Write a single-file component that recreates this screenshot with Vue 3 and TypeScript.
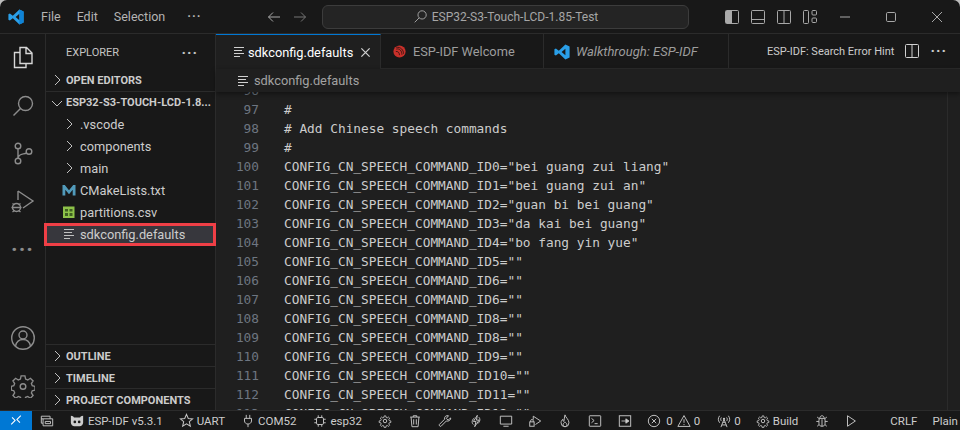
<script setup lang="ts">
interface Row { label: string; kind: 'folder' | 'cmake' | 'csv' | 'text' }
const rows: Row[] = [
  { label: '.vscode', kind: 'folder' },
  { label: 'components', kind: 'folder' },
  { label: 'main', kind: 'folder' },
  { label: 'CMakeLists.txt', kind: 'cmake' },
  { label: 'partitions.csv', kind: 'csv' },
  { label: 'sdkconfig.defaults', kind: 'text' },
]
const p = 'CONFIG_CN_SPEECH_COMMAND_ID'
const lines: [number, string][] = [
  [96, ''], [97, '#'], [98, '# Add Chinese speech commands'], [99, '#'],
  [100, p + '0="bei guang zui liang"'], [101, p + '1="bei guang zui an"'],
  [102, p + '2="guan bi bei guang"'], [103, p + '3="da kai bei guang"'],
  [104, p + '4="bo fang yin yue"'], [105, p + '5=""'], [106, p + '6=""'],
  [107, p + '6=""'], [108, p + '8=""'], [109, p + '8=""'], [110, p + '9=""'],
  [111, p + '10=""'], [112, p + '11=""'], [113, p + '12=""'],
]
</script>

<template>
  <div class="win">
    <header class="title">
      <svg class="logo" viewBox="0 0 16 16" width="16" height="16">
        <path d="M11.4 0.6 15.6 2.4v11.2l-4.2 1.8L4.8 9.2 1.9 11.5.4 10.7V5.3l1.5-.8 2.9 2.3zM11.4 4.8 7.6 8l3.8 3.2z" fill="#2a9fe8"/>
        <path d="M11.4.6 15.6 2.4v11.2l-4.2 1.8z" fill="#0f83d6"/>
      </svg>
      <nav class="menu"><span>File</span><span>Edit</span><span>Selection</span><span class="menu-more">···</span></nav>
      <div class="arrows">
        <svg viewBox="0 0 16 16" width="16" height="16"><path d="M14 8H2.500M7 3.500 2.500 8 7 12.500" class="ln"/></svg>
        <svg class="dim" viewBox="0 0 16 16" width="16" height="16"><path d="M2 8h11.500M9 3.500 13.500 8 9 12.500" class="ln"/></svg>
      </div>
      <div class="search">
        <svg viewBox="0 0 16 16" width="15" height="15"><circle cx="9.700" cy="6.300" r="4.400" class="ln"/><path d="M6.500 9.500 1.800 14.200" class="ln"/></svg>
        <span>ESP32-S3-Touch-LCD-1.85-Test</span>
      </div>
      <div class="layouts">
        <svg viewBox="0 0 16 16" width="16" height="16"><rect x="1.500" y="1.500" width="13" height="13" rx="1" class="ln"/><rect x="2" y="2" width="6" height="12" fill="#aaa"/></svg>
        <svg viewBox="0 0 16 16" width="16" height="16"><rect x="1.500" y="1.500" width="13" height="13" rx="1" class="ln"/><path d="M2 10.500h12" class="ln"/></svg>
        <svg viewBox="0 0 16 16" width="16" height="16"><rect x="1.500" y="1.500" width="13" height="13" rx="1" class="ln"/><path d="M8 2v12" class="ln"/></svg>
        <svg viewBox="0 0 16 16" width="16" height="16"><rect x="1.500" y="1.500" width="5" height="13" rx="1" class="ln"/><rect x="10" y="1.500" width="4.500" height="4.500" rx="1" class="ln"/><rect x="10" y="9" width="4.500" height="4.500" rx="1" class="ln"/></svg>
      </div>
      <div class="winbtns">
        <svg viewBox="0 0 12 12" width="12" height="12"><path d="M1 6h10" class="ln"/></svg>
        <svg viewBox="0 0 12 12" width="12" height="12"><rect x="1.500" y="1.500" width="9" height="9" rx="1.200" class="ln"/></svg>
        <svg viewBox="0 0 12 12" width="12" height="12"><path d="M1 1l10 10M11 1 1 11" class="ln"/></svg>
      </div>
    </header>

    <div class="main">
      <aside class="activity">
        <svg class="act on" viewBox="0 0 24 24" width="24" height="24"><path d="M9 1.500h6.500L21 7V17.500H9z M15 1.500V7.500h6 M9 6.500H3.500V21.500H15V17.500" class="ln"/></svg>
        <svg class="act" viewBox="0 0 24 24" width="24" height="24"><circle cx="14.500" cy="9.500" r="7" class="ln"/><path d="M9.500 14.500 2.500 21.500" class="ln"/></svg>
        <svg class="act" viewBox="0 0 24 24" width="24" height="24"><circle cx="7" cy="4" r="2.800" class="ln"/><circle cx="7" cy="19" r="2.800" class="ln"/><circle cx="18" cy="9.500" r="2.800" class="ln"/><path d="M7 6.800v9.400M15.500 11c-3 1.500-8 0-8.500 5.200" class="ln"/></svg>
        <svg class="act" viewBox="0 0 24 24" width="24" height="24"><path d="M7 1 22 11 12 18M7 1v9" class="ln"/><circle cx="5.500" cy="17.500" r="4" class="ln"/><path d="M1.500 13.500l2 1.500M9.500 13.500l-2 1.500M.5 17.500h10M1.500 22l2-1.500M9.500 22l-2-1.500" class="ln"/></svg>
        <span class="act dots">···</span>
        <div class="spacer"></div>
        <svg class="act" viewBox="0 0 24 24" width="24" height="24"><circle cx="12" cy="12" r="11.300" class="ln"/><circle cx="12" cy="9" r="4" class="ln"/><path d="M4.500 20c1-4.500 3.500-6.500 7.500-6.500s6.500 2 7.500 6.500" class="ln"/></svg>
        <svg class="act" viewBox="0 0 24 24" width="24" height="24"><path d="M10 1.500h4l.7 3.300 2.200.9 2.800-1.800 2.800 2.800-1.800 2.800.9 2.200 2.900.7v3.800l-2.900.7-.9 2.200 1.800 2.800-2.800 2.800-2.800-1.800-2.200.9-.7 1.700h-4l-.7-1.700-2.200-.9-2.800 1.800-2.800-2.800 1.800-2.800-.9-2.200-2.600-.7v-3.800l2.600-.7.9-2.200-1.800-2.800 2.800-2.800 2.800 1.800 2.200-.9z" class="ln" transform="translate(0.500 0.500) scale(.96)"/><circle cx="12" cy="12.500" r="2.800" class="ln"/></svg>
      </aside>

      <aside class="side">
        <div class="side-head"><span>EXPLORER</span><span class="side-more">···</span></div>
        <div class="sec"><svg class="chev" viewBox="0 0 16 16" width="16" height="16"><path d="M6 3l5 5-5 5" class="ln"/></svg><b>OPEN EDITORS</b></div>
        <div class="sec root"><svg class="chev" viewBox="0 0 16 16" width="16" height="16"><path d="M3 6l5 5 5-5" class="ln"/></svg><b>ESP32-S3-TOUCH-LCD-1.8...</b></div>
        <div v-for="r in rows" :key="r.label" class="row" :class="{ sel: r.kind === 'text' }">
          <svg v-if="r.kind === 'folder'" class="ric" viewBox="0 0 16 16" width="16" height="16"><path d="M6 3l5 5-5 5" class="ln"/></svg>
          <svg v-else-if="r.kind === 'cmake'" class="ric" viewBox="0 0 16 16" width="16" height="16"><path d="M1.500 13.500V3h2.300L8 8.300 12.200 3h2.300v10.500h-2.800V7.800L8 12.300 4.300 7.800v5.700z" fill="#519aba"/></svg>
          <svg v-else-if="r.kind === 'csv'" class="ric" viewBox="0 0 16 16" width="16" height="16"><rect x="2" y="2.500" width="11.500" height="11.500" fill="#8dc149"/><path d="M4 5h3v2.500H4zM8.500 5h3v2.500h-3zM4 9h3v3H4zM8.500 9h3v3h-3z" fill="#3f5f22"/></svg>
          <svg v-else class="ric" viewBox="0 0 16 16" width="16" height="16"><path d="M3 3.500h10M3 6.500h8M3 9.500h10M3 12.500h6" class="ln bright"/></svg>
          <span>{{ r.label }}</span>
        </div>
        <div class="spacer"></div>
        <div v-for="s in ['OUTLINE', 'TIMELINE', 'PROJECT COMPONENTS']" :key="s" class="sec foot">
          <svg class="chev" viewBox="0 0 16 16" width="16" height="16"><path d="M6 3l5 5-5 5" class="ln"/></svg><b>{{ s }}</b>
        </div>
      </aside>

      <section class="editor">
        <div class="tabs">
          <div class="tab active">
            <svg viewBox="0 0 16 16" width="16" height="16"><path d="M3 3.500h10M3 6.500h8M3 9.500h10M3 12.500h6" class="ln bright"/></svg>
            <span>sdkconfig.defaults</span>
            <svg class="x" viewBox="0 0 16 16" width="11" height="11"><path d="M2 2l12 12M14 2 2 14" class="ln bright xl"/></svg>
          </div>
          <div class="tab welcome">
            <svg viewBox="0 0 16 16" width="13" height="13"><circle cx="8" cy="8" r="7.500" fill="#c8302a"/><path d="M4 5c4-1 7 2 7 7M3.500 8c2.500-.5 4.500 1.500 4.500 4.500M4 2.800c5.500-.5 9 3.200 9 8" stroke="#2a1210" stroke-width="1" fill="none"/></svg>
            <span>ESP-IDF Welcome</span>
          </div>
          <div class="tab walk">
            <svg viewBox="0 0 16 16" width="16" height="16"><path d="M11.400.6 15.600 2.400v11.200l-4.200 1.800L4.800 9.200 1.900 11.500.4 10.700V5.300l1.500-.8 2.900 2.300zM11.400 4.800 7.600 8l3.800 3.200z" fill="#2a9fe8"/></svg>
            <em>Walkthrough: ESP-IDF</em>
          </div>
          <div class="tab-actions">
            <span>ESP-IDF: Search Error Hint</span>
            <svg viewBox="0 0 16 16" width="16" height="16"><rect x="1.500" y="1.500" width="13" height="13" rx="1" class="ln bright"/><path d="M8 2v12" class="ln bright"/></svg>
            <span class="more">···</span>
          </div>
        </div>
        <div class="crumb">
          <svg viewBox="0 0 16 16" width="16" height="16"><path d="M3 3.500h10M3 6.500h8M3 9.500h10M3 12.500h6" class="ln bright"/></svg>
          <span>sdkconfig.defaults</span>
        </div>
        <div class="code-wrap">
          <div class="code">
            <div v-for="l in lines" :key="l[0]" class="line"><span class="num">{{ l[0] }}</span><span class="txt">{{ l[1] }}</span></div>
          </div>
          <div class="ruler"></div>
        </div>
      </section>
    </div>

    <footer class="status">
      <div class="remote"><svg viewBox="0 0 16 16" width="14" height="14"><path d="M2.500 13 7 8.500 3.500 5M13.500 3 9 7.500l3.500 3.500" stroke="#fff" stroke-width="1.200" fill="none"/></svg></div>
      <div class="st s-folder"><svg viewBox="0 0 16 16" width="14" height="14"><path d="M1.500 2.500h10v3h3v8h-11v-3h-2zM3.500 5.500h8M1.500 5.500h2v5M6 8.500h6v2.500H6z" class="ln"/></svg></div>
      <div class="st s-idf"><svg viewBox="0 0 16 16" width="14" height="14"><path d="M1 2c2 0 3 1 3.500 2h7C12 3 13 2 15 2v8c0 2-2 4-4 4H5c-2 0-4-2-4-4z" fill="#ccc"/><circle cx="5.500" cy="9" r="1.500" fill="#181818"/><circle cx="10.500" cy="9" r="1.500" fill="#181818"/></svg><span>ESP-IDF v5.3.1</span></div>
      <div class="st"><svg viewBox="0 0 16 16" width="15" height="15"><path d="M8 1.500l1.900 4.400 4.600.4-3.500 3 1.100 4.700L8 11.500l-4.100 2.500L5 9.300l-3.500-3 4.600-.4z" class="ln"/></svg><span>UART</span></div>
      <div class="st"><svg viewBox="0 0 16 16" width="14" height="14"><path d="M6 1v4M10 1v4M4 5h8v3c0 2-2 3.500-4 3.500S4 10 4 8zM8 11.500V15" class="ln"/></svg><span>COM52</span></div>
      <div class="st s-chip"><svg viewBox="0 0 16 16" width="14" height="14"><rect x="4" y="4" width="8" height="8" rx="1.500" class="ln"/><path d="M6 1.500V4M10 1.500V4M6 12v2.500M10 12v2.500M1.500 6H4M1.500 10H4M12 6h2.500M12 10h2.500" class="ln"/></svg><span>esp32</span></div>
      <div class="st"><svg viewBox="0 0 16 16" width="14" height="14"><path d="M7 1.500h2l.4 2 1.400.6 1.700-1.100 1.400 1.400-1.100 1.700.6 1.400 2 .4v2l-2 .4-.6 1.400 1.100 1.700-1.400 1.400-1.700-1.100-1.400.6-.4 2H7l-.4-2-1.400-.6-1.700 1.100-1.400-1.400 1.100-1.700-.6-1.400-2-.4v-2l2-.4.6-1.400-1.100-1.700 1.400-1.400 1.700 1.100 1.400-.6z" class="ln" transform="translate(.800 .800) scale(.9)"/><circle cx="8" cy="8" r="2" class="ln"/></svg></div>
      <div class="st"><svg viewBox="0 0 16 16" width="14" height="14"><path d="M2.500 3.500h11M6 3.500V2h4v1.500M3.500 3.500l1 11h7l1-11M6.500 6v6M9.500 6v6" class="ln"/></svg></div>
      <div class="st"><svg viewBox="0 0 16 16" width="14" height="14"><path d="M14.500 4.500 11.500 7 9.500 5l2.500-3c-2.500-.8-5 1-4.500 4L1.500 12c-.5 1 .8 2.800 2 2l6-6c3 .8 5.500-1.500 5-3.500z" class="ln"/></svg></div>
      <div class="st s-w"><svg viewBox="0 0 16 16" width="14" height="14"><path d="M9.500 1.500 5 8.500h3L6.500 14.500l5-7.500H8.500z M11 3.500c2 1.500 2 5-1 7.500M5 12c-2-1.500-2-5 1-7.500" class="ln"/></svg></div>
      <div class="st"><svg viewBox="0 0 16 16" width="14" height="14"><path d="M1.500 2.500h13v9h-13z" class="ln"/><path d="M5 14h6" class="ln"/></svg></div>
      <div class="st s-n"><svg viewBox="0 0 16 16" width="14" height="14"><path d="M6 2.500 14.500 8 8.500 12M6 2.500v4" class="ln"/><rect x="2" y="9" width="5" height="5" class="ln"/><path d="M3 9V7.500c0-1.500 3-1.500 3 0V9" class="ln"/></svg></div>
      <div class="st s-f"><svg viewBox="0 0 16 16" width="14" height="14"><path d="M8 1c.5 3 4.500 5 4.500 9A4.500 4.500 0 0 1 8 14.500 4.500 4.500 0 0 1 3.500 10c0-2 1-3 2-4 0 1.500.5 2.500 1.200 2.500C7.500 6.500 7 3 8 1zM8 14.500c-1.500 0-2.200-1-2.200-2.200 0-1.300 1.200-2 2.200-3.300 1 1.300 2.200 2 2.200 3.300 0 1.200-.7 2.200-2.200 2.200z" class="ln"/></svg></div>
      <div class="st"><svg viewBox="0 0 16 16" width="14" height="14"><rect x="1.500" y="2" width="13" height="12" rx=".5" class="ln"/><path d="M4 5l3 2.500L4 10M7.500 11H11" class="ln"/></svg></div>
      <div class="st"><svg viewBox="0 0 16 16" width="14" height="14"><rect x="1.500" y="2" width="13" height="12" class="ln"/><path d="M4 8h5V5.500L12.500 8 9 10.500V8" fill="#ccc" stroke="#ccc"/></svg></div>
      <div class="st s-err">
        <svg viewBox="0 0 16 16" width="14" height="14"><circle cx="8" cy="8" r="6.500" class="ln"/><path d="M5.500 5.500l5 5M10.500 5.500l-5 5" class="ln"/></svg><span class="n1">0</span>
        <svg viewBox="0 0 16 16" width="14" height="14"><path d="M8 1.800 15 14.200H1zM8 6v4M8 11.500v1.200" class="ln"/></svg><span>0</span>
      </div>
      <div class="st s-ant"><svg viewBox="0 0 16 16" width="14" height="14"><path d="M8 6 4.500 15M8 6l3.500 9M5.500 12.500h5M6.500 9.500h3M3 2c-2 3-2 5 0 8M13 2c2 3 2 5 0 8M5 4c-1 1-1 3 0 4M11 4c1 1 1 3 0 4" class="ln"/><circle cx="8" cy="5.500" r="1.200" fill="#ccc"/></svg><span>0</span></div>
      <div class="st s-b"><svg viewBox="0 0 16 16" width="14" height="14"><path d="M7 1.500h2l.4 2 1.400.6 1.700-1.100 1.400 1.400-1.100 1.700.6 1.400 2 .4v2l-2 .4-.6 1.400 1.100 1.700-1.400 1.400-1.700-1.100-1.400.6-.4 2H7l-.4-2-1.400-.6-1.700 1.100-1.400-1.400 1.100-1.700-.6-1.400-2-.4v-2l2-.4.6-1.400-1.100-1.700 1.400-1.400 1.700 1.100 1.400-.6z" class="ln" transform="translate(.800 .800) scale(.9)"/><circle cx="8" cy="8" r="2" class="ln"/></svg><span>Build</span></div>
      <div class="st s-ant"><svg viewBox="0 0 16 16" width="14" height="14"><path d="M5 5h6l.5 2v4c0 2-1.500 3-3.500 3s-3.500-1-3.500-3V7zM5.500 5c0-4 5-4 5 0M8 6v8M1.500 8.500h3M11.500 8.500h3M2.500 3.500 5 5.500M13.500 3.500 11 5.500M2.500 14l2.300-2M13.500 14l-2.300-2" class="ln"/></svg></div>
      <div class="st s-n"><svg viewBox="0 0 16 16" width="14" height="14"><path d="M4 2v12l9-6z" class="ln"/></svg></div>
      <div class="st s-crlf"><span>CRLF</span></div>
      <div class="st s-plain"><span>Plain Text</span></div>
    </footer>
  </div>
</template>

<style>
html, body { margin: 0; background: #bdbdbd; overflow: hidden; }
</style>

<style scoped>
.win {
  width: 960px; height: 430px; display: flex; flex-direction: column; overflow: hidden;
  background: #181818; color: #ccc; font-family: Roboto, "Noto Sans", sans-serif; font-size: 12.8px;
  border-radius: 7px 7px 0 0;
}
.ln { fill: none; stroke: #a8a8a8; stroke-width: 1; }
.bright { stroke: #d0d0d0; }
.xl { stroke-width: 1.800; }
.spacer { flex: 1; }
svg { flex: none; display: block; }

.title { height: 33px; flex: none; display: flex; align-items: center; border-bottom: 1px solid #2b2b2b; padding-left: 8px; }
.menu { display: flex; margin-left: 17px; color: #b4b4b4; font-size: 12.5px; gap: 16px; width: 214px; }
.menu-more { letter-spacing: 1px; font-weight: 700; margin-left: 6px; }
.arrows { display: flex; gap: 10px; width: 60px; padding-left: 11px; }
.dim { opacity: .65; }
.search {
  width: 365px; height: 22px; margin-left: -4px; border: 1px solid #3c3c3c; border-radius: 6px; background: #242424;
  display: flex; align-items: center; justify-content: center; gap: 4px; color: #a6a6a6; font-size: 12px;
}
.layouts { display: flex; gap: 10px; margin-left: 35px; }
.winbtns { display: flex; gap: 34px; margin-left: 21px; }

.main { flex: 1; min-height: 0; display: flex; }
.activity { width: 46px; flex: none; box-sizing: border-box; border-right: 1px solid #2b2b2b; display: flex; flex-direction: column; align-items: center; padding: 12px 0; }
.activity .ln { stroke: #8c8c8c; stroke-width: 1.400; }
.act { margin-bottom: 24px; }
.act:nth-last-child(1) { margin-bottom: 0; }
.activity .act.on .ln { stroke: #d7d7d7; }
.dots { font-size: 22px; font-weight: 700; letter-spacing: 1px; color: #8c8c8c; line-height: 24px; margin-bottom: 0; }

.side { width: 169px; flex: none; border-right: 1px solid #2b2b2b; display: flex; flex-direction: column; }
.side .ln { stroke: #c0c0c0; }
.side-head { height: 35px; flex: none; box-sizing: border-box; padding: 2px 17px 0 20px; display: flex; align-items: center; justify-content: space-between; font-size: 11px; color: #c4c4c4; }
.side-more { font-size: 15px; font-weight: 700; letter-spacing: 1px; }
.sec { height: 22px; flex: none; display: flex; align-items: center; font-size: 11px; color: #ccc; padding-left: 3px; gap: 1px; box-sizing: border-box; white-space: nowrap; }
.sec b { font-weight: 700; }
.root { border-top: 1px solid #2b2b2b; }
.foot { border-top: 1px solid #2b2b2b; padding-top: 1px; }
.row { height: 22px; flex: none; display: flex; align-items: center; gap: 3px; padding-left: 15px; color: #ccc; box-sizing: border-box; position: relative; }
.ric { width: 16px; }
.sel { background: #37373d; }
.sel::after { content: ""; position: absolute; left: -2px; right: -1px; top: 0; bottom: -1px; border: 3px solid #ef3f46; z-index: 2; }

.editor { flex: 1; min-width: 0; display: flex; flex-direction: column; background: #1f1f1f; }
.tabs { height: 35px; flex: none; display: flex; background: #181818; border-bottom: 1px solid #2b2b2b; box-sizing: border-box; }
.tab { height: 35px; box-sizing: border-box; display: flex; align-items: center; gap: 6px; border-right: 1px solid #2b2b2b; color: #9d9d9d; padding-left: 15px; }
.active { width: 165px; background: #1f1f1f; color: #fff; border-top: 1px solid #0078d4; gap: 1px; }
.active .x { margin-left: 6px; }
.welcome { width: 163px; padding-left: 12px; gap: 7px; }
.walk { width: 185px; padding-left: 10px; gap: 6px; }
.walk em { font-style: italic; font-size: 13px; }
.tab-actions { flex: 1; display: flex; align-items: center; justify-content: flex-end; gap: 10px; padding-right: 13px; font-size: 11px; color: #ccc; }
.more { font-weight: 700; letter-spacing: 1px; font-size: 15px; }
.crumb { height: 23px; flex: none; display: flex; align-items: center; gap: 3px; padding-left: 19px; color: #a2a2a2; box-shadow: 0 2px 5px rgba(0,0,0,.45); position: relative; z-index: 1; background: #1f1f1f; }
.code-wrap { flex: 1; min-height: 0; display: flex; overflow: hidden; }
.code { flex: 1; margin-top: -11px; font-family: "DejaVu Sans Mono", monospace; font-size: 12.8px; color: #cccccc; }
.line { height: 19px; line-height: 19px; display: flex; white-space: pre; }
.num { width: 43px; text-align: right; color: #6e7681; }
.txt { margin-left: 25px; }
.ruler { width: 12px; flex: none; border-left: 1px solid #2b2b2b; }

.status { height: 20px; flex: none; display: flex; align-items: center; font-size: 11.5px; color: #ccc; border-top: 1px solid #2b2b2b; box-sizing: border-box; white-space: nowrap; overflow: hidden; }
.status .ln { stroke: #c4c4c4; stroke-width: 1.100; }
.remote { width: 32px; height: 20px; background: #0078d4; display: flex; align-items: center; justify-content: center; margin-top: -1px; flex: none; }
.st { display: flex; align-items: center; gap: 3px; flex: none; margin-left: 16px; }
.s-folder { margin-left: 8px; }
.s-idf { gap: 4px; }
.s-chip, .s-w { margin-left: 17px; }
.s-n { margin-left: 15px; }
.s-f { margin-left: 16.5px; }
.s-err { margin-left: 15px; }
.n1 { margin: 0 1px 0 2px; }
.s-ant { margin-left: 17px; }
.s-b { margin-left: 15px; }
.s-crlf { margin-left: 32px; }
.s-plain { margin-left: 15px; }
</style>
